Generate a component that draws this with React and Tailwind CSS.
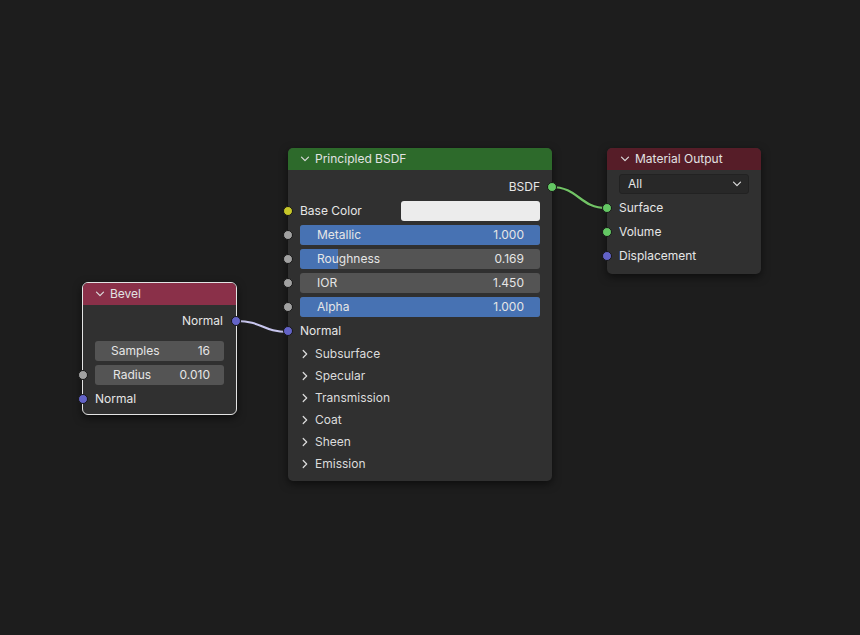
const font = { fontFamily: "Inter, 'Noto Sans', sans-serif" };

const socketColors = {
  yellow: "bg-[#c7c729]",
  grey: "bg-[#a1a1a1]",
  purple: "bg-[#6363c7]",
  green: "bg-[#63c763]",
};

const Socket = ({ color, side }) => (
  <span
    className={`absolute top-1/2 -translate-y-1/2 w-[10px] h-[10px] rounded-full border border-[#161616] ${socketColors[color]} ${
      side === "left" ? "-left-[5px]" : "-right-[5px]"
    }`}
  />
);

const Chevron = ({ dir = "down", className = "" }) => (
  <svg width="10" height="10" viewBox="0 0 10 10" className={className}>
    {dir === "down" ? (
      <path d="M1.5 3.2 L5 6.7 L8.5 3.2" fill="none" stroke="#dcdcdc" strokeWidth="1.2" strokeLinecap="round" strokeLinejoin="round" />
    ) : (
      <path d="M3.2 1.5 L6.7 5 L3.2 8.5" fill="none" stroke="#dcdcdc" strokeWidth="1.2" strokeLinecap="round" strokeLinejoin="round" />
    )}
  </svg>
);

const Header = ({ title, color, pl }) => (
  <div className={`h-[22px] flex items-center gap-[5px] rounded-t-[5px] ${color} ${pl} text-[12px] text-[#e2e2e2]`}>
    <Chevron />
    <span>{title}</span>
  </div>
);

const Slider = ({ label, value, fill }) => (
  <div className="relative h-[20px] rounded-[3px] bg-[#545454] overflow-hidden">
    <div className="absolute inset-y-0 left-0 bg-[#4772b3]" style={{ width: `${fill * 100}%` }} />
    <div className="relative h-full flex items-center justify-between pl-[17px] pr-[16px] text-[12px] text-[#e6e6e6]">
      <span>{label}</span>
      <span>{value}</span>
    </div>
  </div>
);

const Panel = ({ label }) => (
  <div className="h-[22px] flex items-center gap-[5px] pl-[12px] text-[12px] text-[#dcdcdc]">
    <Chevron dir="right" />
    <span>{label}</span>
  </div>
);

export default function App() {
  return (
    <div className="relative w-[860px] h-[635px] bg-[#1d1d1d] overflow-hidden" style={font}>
      <svg className="absolute inset-0 pointer-events-none" width="860" height="635">
        <path d="M237 321 C 262 321, 263 332, 288 332" fill="none" stroke="#c8c6ee" strokeWidth="2.2" />
        <path d="M551 187 C 579 187, 579 208, 607 208" fill="none" stroke="#1a1a1a" strokeWidth="4" />
        <path d="M551 187 C 579 187, 579 208, 607 208" fill="none" stroke="#72c466" strokeWidth="2.2" />
      </svg>

      {/* Bevel */}
      <div className="absolute left-[82px] top-[282px] w-[155px] rounded-[6px] border border-[#e4e4e4] bg-[#303030] shadow-[0_3px_8px_rgba(0,0,0,0.55)]">
        <Header title="Bevel" color="bg-[#8a3049]" pl="pl-[12px]" />
        <div className="pt-[4px] pb-[3px]">
          <div className="relative h-[24px] flex items-center justify-end pr-[13px] text-[12px] text-[#e6e6e6]">
            Normal
            <Socket color="purple" side="right" />
          </div>
          <div className="h-[6px]" />
          <div className="relative h-[24px] flex items-center px-[12px]">
            <div className="flex-1 h-[20px] rounded-[3px] bg-[#545454] flex items-center justify-between pl-[16px] pr-[14px] text-[12px] text-[#e6e6e6]">
              <span>Samples</span>
              <span>16</span>
            </div>
          </div>
          <div className="relative h-[24px] flex items-center px-[12px]">
            <Socket color="grey" side="left" />
            <div className="flex-1 h-[20px] rounded-[3px] bg-[#545454] flex items-center justify-between pl-[18px] pr-[14px] text-[12px] text-[#e6e6e6]">
              <span>Radius</span>
              <span>0.010</span>
            </div>
          </div>
          <div className="relative h-[24px] flex items-center pl-[12px] text-[12px] text-[#e6e6e6]">
            <Socket color="purple" side="left" />
            Normal
          </div>
        </div>
      </div>

      {/* Principled BSDF */}
      <div className="absolute left-[288px] top-[148px] w-[264px] rounded-[5px] bg-[#303030] shadow-[0_3px_8px_rgba(0,0,0,0.55)]">
        <Header title="Principled BSDF" color="bg-[#2d6a2b]" pl="pl-[12px]" />
        <div className="pt-[5px] pb-[6px]">
          <div className="relative h-[24px] flex items-center justify-end pr-[12px] text-[12px] text-[#e6e6e6]">
            BSDF
            <Socket color="green" side="right" />
          </div>
          <div className="relative h-[24px] flex items-center px-[12px] text-[12px] text-[#e6e6e6]">
            <Socket color="yellow" side="left" />
            <span className="w-[101px]">Base Color</span>
            <div className="flex-1 h-[20px] rounded-[3px] bg-[#ececec]" />
          </div>
          {[
            ["Metallic", "1.000", 1],
            ["Roughness", "0.169", 0.159],
            ["IOR", "1.450", 0],
            ["Alpha", "1.000", 1],
          ].map(([l, v, f]) => (
            <div key={l} className="relative h-[24px] flex flex-col justify-center px-[12px]">
              <Socket color="grey" side="left" />
              <Slider label={l} value={v} fill={f} />
            </div>
          ))}
          <div className="relative h-[24px] flex items-center pl-[12px] text-[12px] text-[#e6e6e6]">
            <Socket color="purple" side="left" />
            Normal
          </div>
          {["Subsurface", "Specular", "Transmission", "Coat", "Sheen", "Emission"].map((p) => (
            <Panel key={p} label={p} />
          ))}
        </div>
      </div>

      {/* Material Output */}
      <div className="absolute left-[607px] top-[148px] w-[154px] rounded-[5px] bg-[#303030] shadow-[0_3px_8px_rgba(0,0,0,0.55)]">
        <Header title="Material Output" color="bg-[#561d28]" pl="pl-[13px]" />
        <div className="pt-[2px] pb-[6px]">
          <div className="h-[24px] flex items-center px-[12px]">
            <div className="flex-1 h-[20px] rounded-[3px] bg-[#282828] border border-[#222] flex items-center justify-between pl-[8px] pr-[6px] text-[12px] text-[#e6e6e6]">
              <span>All</span>
              <Chevron />
            </div>
          </div>
          {[
            ["Surface", "green"],
            ["Volume", "green"],
            ["Displacement", "purple"],
          ].map(([l, c]) => (
            <div key={l} className="relative h-[24px] flex items-center pl-[12px] text-[12px] text-[#e6e6e6]">
              <Socket color={c} side="left" />
              {l}
            </div>
          ))}
        </div>
      </div>
    </div>
  );
}
